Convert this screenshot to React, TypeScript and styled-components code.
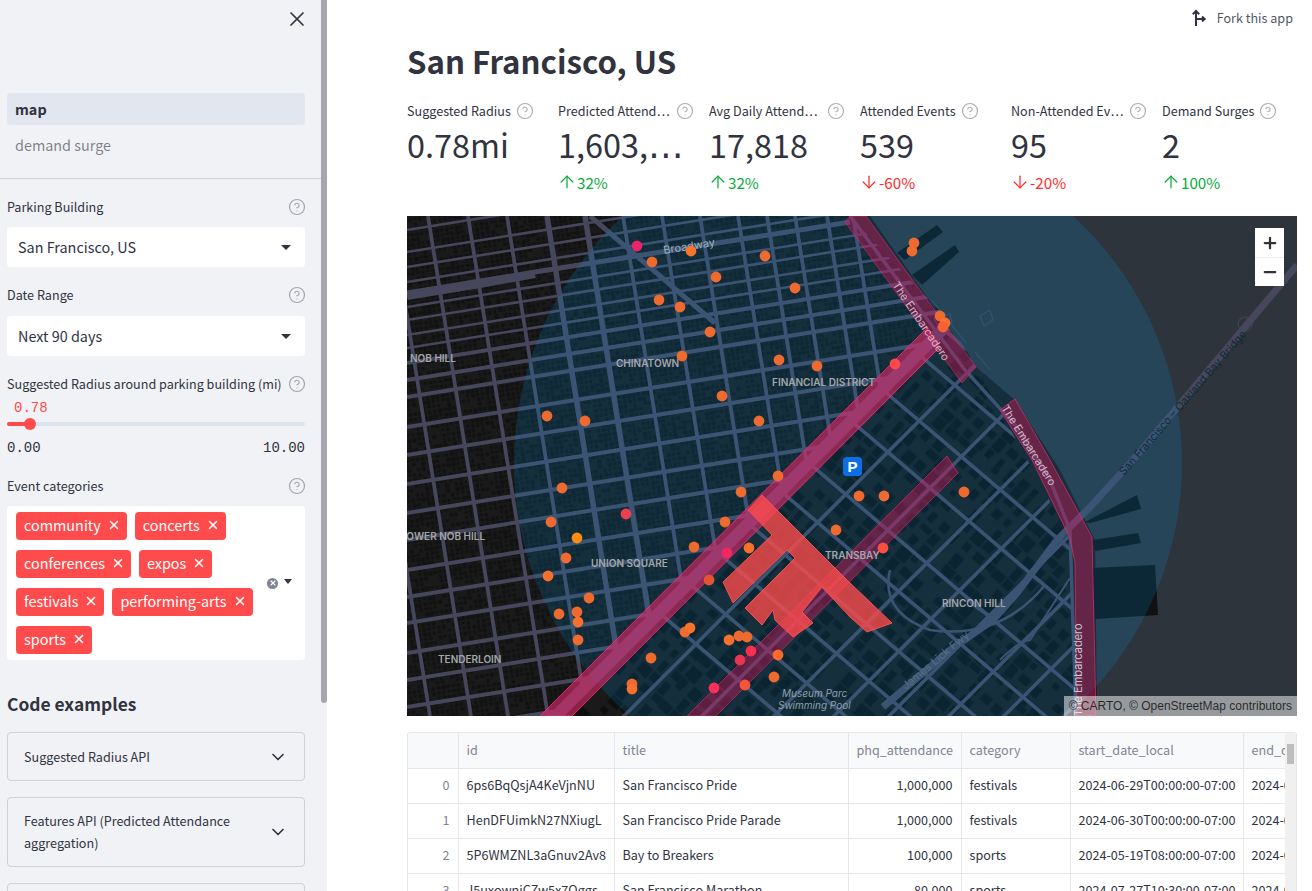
import React, { useMemo } from 'react';
import styled, { createGlobalStyle } from 'styled-components';
import { ArrowDown, ArrowUp, ChevronDown, CircleHelp, Minus, Plus, X } from 'lucide-react';

const TEXT = '#31333f';
const RED = '#ff4b4b';

const GlobalStyle = createGlobalStyle`
  html, body {
    margin: 0;
    height: 100%;
    overflow: hidden;
    background: #fff;
    color: ${TEXT};
    font-family: "Noto Sans CJK SC", "Noto Sans", sans-serif;
  }
  * { box-sizing: border-box; }
`;

const Page = styled.div`
  display: flex;
  height: 891px;
  overflow: hidden;
`;

const Sidebar = styled.aside`
  display: flex;
  flex: 0 0 327px;
  height: 100%;
  background: #f0f2f6;
`;

const SideContent = styled.div`
  flex: 0 0 321px;
  min-width: 0;
  padding-left: 7px;
  padding-right: 16px;
`;

const ScrollThumb = styled.div`
  flex: 0 0 6px;
  height: 703px;
  background: #a6a6ae;
  border-radius: 0 0 3px 3px;
`;

const CloseRow = styled.div`
  display: flex;
  justify-content: flex-end;
  align-items: center;
  height: 38px;
  margin-right: -4px;
  margin-bottom: 55px;
`;

const Nav = styled.nav`
  display: flex;
  flex-direction: column;
  gap: 5px;
  margin-bottom: 16px;
`;

const NavItem = styled.div<{ $active?: boolean }>`
  height: 32px;
  line-height: ${p => (p.$active ? 32 : 30)}px;
  padding-left: 8px;
  border-radius: 4px;
  font-size: 14.4px;
  font-weight: ${p => (p.$active ? 700 : 400)};
  color: ${p => (p.$active ? TEXT : 'rgba(49, 51, 63, 0.6)')};
  background: ${p => (p.$active ? '#e2e6ee' : 'transparent')};
`;

const Divider = styled.div`
  height: 1px;
  background: #cfd0d5;
  margin: 0 -16px 18px -7px;
`;

const FieldLabel = styled.div<{ $gap?: number }>`
  display: flex;
  justify-content: space-between;
  align-items: center;
  height: 20px;
  font-size: 12.6px;
  line-height: 20px;
  margin-bottom: ${p => p.$gap ?? 10}px;
  margin-right: -1px;
  white-space: nowrap;
`;

const Help = styled(CircleHelp)`
  flex: none;
  color: rgba(49, 51, 63, 0.4);
`;

const SelectBox = styled.div`
  display: flex;
  justify-content: space-between;
  align-items: center;
  height: 40px;
  padding: 0 14px 2px 11px;
  margin-bottom: 18px;
  background: #fff;
  border-radius: 4px;
  font-size: 14.4px;
`;

const Caret = styled.span`
  width: 0;
  height: 0;
  margin-top: 2px;
  border-left: 5px solid transparent;
  border-right: 5px solid transparent;
  border-top: 5px solid ${TEXT};
`;

const SliderValue = styled.div`
  margin-top: 4px;
  padding-left: 7px;
  height: 20px;
  line-height: 20px;
  font-family: "Liberation Mono", monospace;
  font-size: 14px;
  color: ${RED};
`;

const Track = styled.div`
  position: relative;
  height: 4px;
  margin-top: 4px;
  border-radius: 2px;
  background: #dfe3ed;
`;

const TrackFill = styled.div`
  height: 100%;
  border-radius: 2px;
  background: ${RED};
`;

const Thumb = styled.div`
  position: absolute;
  top: -4px;
  width: 12px;
  height: 12px;
  border-radius: 50%;
  background: ${RED};
`;

const Ticks = styled.div`
  display: flex;
  justify-content: space-between;
  height: 20px;
  line-height: 20px;
  margin-top: 12px;
  margin-bottom: 18px;
  font-family: "Liberation Mono", monospace;
  font-size: 14px;
`;

const MultiBox = styled.div`
  display: flex;
  align-items: center;
  height: 154px;
  padding-left: 9px;
  background: #fff;
  border-radius: 4px;
`;

const TagWrap = styled.div`
  display: flex;
  flex-wrap: wrap;
  align-content: center;
  gap: 10px 8px;
  flex: 0 0 248px;
`;

const Tag = styled.span`
  display: inline-flex;
  align-items: center;
  height: 28px;
  padding: 0 8px 2px;
  border-radius: 4px;
  background: ${RED};
  color: #fff;
  font-size: 14.4px;
  line-height: 26px;
`;

const TagClose = styled(X)`
  margin-left: 6px;
  margin-right: -2px;
`;

const MultiControls = styled.div`
  display: flex;
  align-items: center;
  gap: 6px;
  margin-left: 3px;
`;

const ClearDot = styled.span`
  display: flex;
  align-items: center;
  justify-content: center;
  width: 11px;
  height: 11px;
  border-radius: 50%;
  background: #7f8391;
  color: #fff;
`;

const SmallCaret = styled(Caret)`
  border-left-width: 4.5px;
  border-right-width: 4.5px;
  margin-top: -3px;
`;

const SideHeading = styled.h2`
  margin: 30px 0 14px;
  height: 28px;
  line-height: 28px;
  font-size: 17.4px;
  font-weight: 700;
  color: ${TEXT};
`;

const Expander = styled.div`
  display: flex;
  justify-content: space-between;
  align-items: center;
  padding: 12px 16px 12px 16px;
  min-height: 49px;
  margin-bottom: 16px;
  border: 1px solid #d0d1d6;
  border-radius: 4px;
  font-size: 12.6px;
  line-height: 22px;
`;

const ExpanderText = styled.span`
  max-width: 230px;
`;

const Main = styled.main`
  flex: 1;
  min-width: 0;
  padding: 0 15px 0 80px;
`;

const TopBar = styled.div`
  display: flex;
  justify-content: flex-end;
  align-items: center;
  gap: 10px;
  height: 36px;
  padding-bottom: 1px;
  margin-right: 4px;
  font-size: 12.6px;
  color: rgba(49, 51, 63, 0.85);
`;

const Title = styled.h1`
  margin: 5px 0 18px;
  height: 40px;
  line-height: 40px;
  font-size: 31.2px;
  font-weight: 700;
`;

const Metrics = styled.section`
  display: grid;
  grid-template-columns: repeat(6, 135px);
  gap: 16px;
  margin-bottom: 23px;
`;

const Metric = styled.div`
  min-width: 0;
`;

const MetricLabelRow = styled.div`
  display: flex;
  align-items: center;
  gap: 5px;
  height: 20px;
  margin-top: 2px;
`;

const MetricLabel = styled.span<{ $cut?: boolean }>`
  flex: ${p => (p.$cut ? '0 0 113px' : '0 0 auto')};
  white-space: nowrap;
  font-size: 12.6px;
  line-height: 20px;
`;

const MetricValue = styled.div`
  height: 48px;
  line-height: 46px;
  font-size: 32.4px;
  white-space: nowrap;
`;

// the CJK font centres its ellipsis, this one sits on the baseline
const Dots = styled.span`
  font-family: "DejaVu Sans", sans-serif;
  font-size: 1.1em;
`;

const MetricDelta = styled.div<{ $down?: boolean }>`
  display: flex;
  align-items: center;
  height: 22px;
  margin-top: 2px;
  margin-left: -1px;
  font-size: 15.2px;
  color: ${p => (p.$down ? '#ff2b2b' : '#09ab3b')};
`;

const DeltaIcon = styled.span`
  display: flex;
`;

const MapCanvas = styled.div`
  position: relative;
  height: 500px;
  overflow: hidden;
  margin-bottom: 16px;
`;

const MapSvg = styled.svg`
  display: block;
  width: 890px;
  height: 500px;
`;

const ZoomControls = styled.div`
  position: absolute;
  top: 12px;
  right: 13px;
  width: 29px;
  background: #fff;
  display: flex;
  flex-direction: column;
`;

const ZoomButton = styled.div`
  display: flex;
  align-items: center;
  justify-content: center;
  height: 29px;
  color: #333;
  & + & {
    border-top: 1px solid #eee;
  }
`;

const Attribution = styled.div`
  position: absolute;
  right: 0;
  bottom: 0;
  height: 20px;
  padding: 0 5px;
  line-height: 20px;
  font-family: "Liberation Sans", Arial, sans-serif;
  font-size: 12px;
  color: rgba(0, 0, 0, 0.75);
  background: rgba(255, 255, 255, 0.5);
  white-space: nowrap;
`;

const TableWrap = styled.div`
  position: relative;
  height: 175px;
  overflow: hidden;
  border: 1px solid #e6e7ea;
  border-bottom: 0;
  border-radius: 4px 4px 0 0;
`;

const DataTable = styled.table`
  table-layout: fixed;
  width: 989px;
  border-collapse: collapse;
  font-size: 12.6px;
`;

const HeadCell = styled.th<{ $right?: boolean }>`
  height: 35px;
  padding: 0 8px 2px;
  background: #f8f9fb;
  border-right: 1px solid #e6e7ea;
  border-bottom: 1px solid #e6e7ea;
  font-weight: 400;
  color: #808495;
  text-align: ${p => (p.$right ? 'right' : 'left')};
  white-space: nowrap;
  overflow: hidden;
`;

const Cell = styled.td<{ $right?: boolean; $muted?: boolean }>`
  height: 35px;
  padding: 0 8px 2px;
  border-right: 1px solid #e6e7ea;
  border-bottom: 1px solid #e6e7ea;
  color: ${p => (p.$muted ? '#808495' : TEXT)};
  text-align: ${p => (p.$right ? 'right' : 'left')};
  white-space: nowrap;
  overflow: hidden;
`;

const TableScroll = styled.div`
  position: absolute;
  top: 0;
  right: 0;
  bottom: 0;
  width: 11px;
  padding-top: 11px;
  background: #f0f0f0;
`;

const TableScrollThumb = styled.div`
  width: 7px;
  height: 20px;
  margin-left: 2px;
  background: #bdbdbd;
`;

const metrics = [
  { label: 'Suggested Radius', value: '0.78mi' },
  { label: 'Predicted Attend', cut: true, value: '1,603,', valueCut: true, delta: '32%' },
  { label: 'Avg Daily Attend', cut: true, value: '17,818', delta: '32%' },
  { label: 'Attended Events', value: '539', delta: '-60%', down: true },
  { label: 'Non-Attended Ev', cut: true, value: '95', delta: '-20%', down: true },
  { label: 'Demand Surges', value: '2', delta: '100%' },
];

const categories = ['community', 'concerts', 'conferences', 'expos', 'festivals', 'performing-arts', 'sports'];

const columns = [
  { name: '', width: 50 },
  { name: 'id', width: 156 },
  { name: 'title', width: 234 },
  { name: 'phq_attendance', width: 113, right: true },
  { name: 'category', width: 109 },
  { name: 'start_date_local', width: 173 },
  { name: 'end_date_local', width: 154 },
];

const rows = [
  ['0', '6ps6BqQsjA4KeVjnNU', 'San Francisco Pride', '1,000,000', 'festivals', '2024-06-29T00:00:00-07:00', '2024-06-30T23:59:59-07:00'],
  ['1', 'HenDFUimkN27NXiugL', 'San Francisco Pride Parade', '1,000,000', 'festivals', '2024-06-30T00:00:00-07:00', '2024-06-30T23:59:59-07:00'],
  ['2', '5P6WMZNL3aGnuv2Av8', 'Bay to Breakers', '100,000', 'sports', '2024-05-19T08:00:00-07:00', '2024-05-19T14:00:00-07:00'],
  ['3', 'J5uxownjCZw5x7Oggs', 'San Francisco Marathon', '80,000', 'sports', '2024-07-27T10:30:00-07:00', '2024-07-28T14:00:00-07:00'],
];

// event dots in page coordinates, the map svg uses the same numbers in its viewBox
const ORANGE = '#ef6a2e';
const dots: [number, number, string?][] = [
  [637, 246, '#e8246a'], [691, 251, '#f5762a'], [652, 262], [765, 256], [716, 277], [795, 288], [659, 300], [680, 307],
  [710, 332], [682, 356], [779, 360], [817, 366], [722, 396], [759, 421], [547, 416], [585, 421],
  [914, 243], [912, 251], [940, 316], [945, 323, '#f8702c'], [943, 327, '#fb5f35'], [895, 364, '#fb4a4c'],
  [778, 476], [741, 492], [562, 488], [626, 514, '#e8404f'], [551, 522], [725, 522], [836, 530], [577, 538, '#fb8c14'],
  [694, 547], [749, 548, '#f9702a'], [727, 553, '#f2275f'], [566, 558], [548, 576, '#f7702c'], [709, 580, '#e4552f'],
  [589, 598], [559, 614], [577, 612], [578, 622, '#f7702c'], [685, 632], [690, 628, '#f9732c'], [578, 640],
  [729, 640, '#f7702c'], [739, 636], [747, 637], [751, 651, '#f7304f'], [778, 655, '#fb6a2a'], [740, 660, '#ea3455'],
  [651, 658], [774, 677], [632, 684], [632, 689, '#f7702c'], [714, 688, '#f7305a'], [745, 685, '#f6553a'],
  [859, 496], [884, 496], [964, 492], [883, 548, '#fb5040'],
];

const westEW = [230, 252, 267, 282, 307, 320, 335, 348, 363, 380, 397, 427, 455, 484, 513, 540, 570, 597, 623, 653, 680, 707, 735, 762, 790];
const westNS = [350, 391, 428, 468, 507, 547, 585, 623, 662, 700, 738, 767, 795, 827, 853];
const eastB = [190, 250, 296, 362, 420, 498, 550, 610, 665, 720, 775];
const eastA = [490, 568, 640, 700, 755, 815, 870, 930];

const seeded = (seed: number) => {
  let s = seed;
  return () => {
    s = (s * 16807) % 2147483647;
    return s / 2147483647;
  };
};

const buildingRects = (size: number, cell: number, min: number, max: number, seed: number) => {
  const rand = seeded(seed);
  const out: { x: number; y: number; w: number; h: number }[] = [];
  for (let y = 0; y < size; y += cell) {
    for (let x = 0; x < size; x += cell) {
      if (rand() < 0.2) continue;
      out.push({ x: x + 0.5, y: y + 0.5, w: min + rand() * (max - min), h: min + rand() * (max - min) });
    }
  }
  return out;
};

const CityMap: React.FC = () => {
  const west = useMemo(() => buildingRects(154, 5, 2.5, 4.5, 7), []);
  const east = useMemo(() => buildingRects(160, 15, 6, 14, 91), []);

  return (
    <MapSvg viewBox="407 216 890 500" xmlns="http://www.w3.org/2000/svg">
      <defs>
        <pattern id="westBuildings" width="154" height="154" patternUnits="userSpaceOnUse" patternTransform="rotate(-9)">
          {west.map((b, i) => (
            <rect key={i} x={b.x} y={b.y} width={b.w} height={b.h} fill="#111" />
          ))}
        </pattern>
        <pattern id="eastBuildings" width="160" height="160" patternUnits="userSpaceOnUse" patternTransform="rotate(42)">
          {east.map((b, i) => (
            <rect key={i} x={b.x} y={b.y} width={b.w} height={b.h} fill="#0e0e0e" />
          ))}
        </pattern>
        <clipPath id="westClip">
          <polygon points="407,216 850,216 950,322 556,716 407,716" />
        </clipPath>
        <clipPath id="eastClip">
          <polygon points="950,322 1000,410 1070,538 1077,716 556,716" />
        </clipPath>
      </defs>

      <rect x="407" y="216" width="890" height="500" fill="#2d343b" />
      <polygon points="407,216 870,216 976,367 1015,400 1060,470 1095,540 1097,716 407,716" fill="#1a1a1a" />
      <rect x="407" y="216" width="890" height="500" fill="url(#westBuildings)" clipPath="url(#westClip)" />
      <rect x="407" y="216" width="890" height="500" fill="url(#eastBuildings)" clipPath="url(#eastClip)" />

      {/* piers */}
      <g fill="#0f1112">
        <polygon points="897,253 937,225 943,232 905,260" />
        <polygon points="912,275 955,245 959,252 922,285" />
        <polygon points="1085,522 1137,495 1141,509 1090,523" />
        <polygon points="1093,540 1138,533 1141,543 1095,551" />
        <polygon points="1092,568 1155,565 1158,615 1095,619" />
      </g>
      <g fill="none" stroke="#3a5566" strokeWidth="0.8">
        <polygon points="934,318 950,314 952,323 938,326" />
        <polygon points="980,316 990,310 993,320 984,326" />
        <polyline points="932,300 966,343" />
        <polyline points="975,352 990,370" />
      </g>

      <g stroke="#46465c" fill="none">
        <g clipPath="url(#westClip)">
          {westEW.map((y, i) => (
            <line key={y} x1={407} y1={y} x2={1000} y2={y - 0.16 * 593} strokeWidth={i < 8 ? 2.6 : 4} />
          ))}
          {westNS.map((x, i) => (
            <line key={x} x1={x} y1={216} x2={x + 0.16 * 500} y2={716} strokeWidth={i === 5 || i === 6 ? 5.5 : 3.8} />
          ))}
          <polyline points="407,293 535,272 850,222" strokeWidth="5" />
          <polyline points="407,296 480,284 535,274" strokeWidth="8" />
          <line x1="590" y1="216" x2="715" y2="323" strokeWidth="5" />
        </g>
        <g clipPath="url(#eastClip)">
          {eastA.map(y => (
            <line key={y} x1={500} y1={y + 350} x2={1150} y2={y - 300} strokeWidth="3.6" />
          ))}
          {eastB.map(y => (
            <line key={y} x1={500} y1={y - 0.85 * 350} x2={1150} y2={y + 0.85 * 300} strokeWidth="3.6" />
          ))}
          <path d="M890 570 Q880 612 930 630 Q1000 640 1045 585" strokeWidth="2.5" />
          <path d="M960 590 Q985 625 1005 610" strokeWidth="2" />
          <path d="M1000 660 Q1020 640 1030 640 L1070 578" strokeWidth="2" />
        </g>
        <line x1="540" y1="732" x2="946" y2="326" strokeWidth="12" />
        <polyline points="850,216 965,370 1015,425 1048,475 1070,530 1076,716" strokeWidth="3.5" />
        <polyline points="883,707 950,650 993,620 1017,593 1057,540 1090,507 1133,460 1297,265" strokeWidth="7" />
        <circle cx="1245" cy="324" r="7" strokeWidth="1" />
      </g>

      <circle cx="848" cy="463" r="334" fill="rgba(0, 165, 255, 0.15)" />

      <g strokeLinejoin="round">
        <polygon points="845,222 850,216 866,216 976,367 962,383" fill="rgba(210, 25, 90, 0.42)" stroke="rgba(225, 45, 105, 0.55)" />
        <polygon points="1000,410 1015,399 1050,460 1092,537 1096,716 1077,716 1075,563 1070,538 1032,460" fill="rgba(210, 25, 90, 0.42)" stroke="rgba(225, 45, 105, 0.7)" />
        <polygon points="687,716 947,456 958,473 716,716" fill="rgba(210, 25, 90, 0.42)" stroke="rgba(225, 45, 105, 0.6)" />
        <polygon points="540,716 927,328 940,347 572,716" fill="rgba(225, 40, 105, 0.6)" stroke="rgba(240, 50, 115, 0.85)" />
        <polygon
          points="748,510 762,495 850,583 892,623 867,632 850,617 822,587 802,612 813,623 793,637 775,620 773,610 762,625 745,608 795,558 787,550 733,603 723,582 772,535"
          fill="rgba(255, 75, 75, 0.78)"
          stroke="#f5514f"
        />
      </g>

      <g fontFamily="Inter, Lato, sans-serif" fontSize="10" fontWeight="600" fill="#a3a7aa">
        <text x="410" y="361.5">NOB HILL</text>
        <text x="616" y="366.5">CHINATOWN</text>
        <text x="772" y="385.5">FINANCIAL DISTRICT</text>
        <text x="401" y="539.5">LOWER NOB HILL</text>
        <text x="591" y="566.5">UNION SQUARE</text>
        <text x="825" y="558.5">TRANSBAY</text>
        <text x="942" y="606.5">RINCON HILL</text>
        <text x="438" y="662.5">TENDERLOIN</text>
      </g>
      <g fontFamily="Inter, Lato, sans-serif" fontSize="10" fontStyle="italic" fill="#8fa0ab">
        <text x="782" y="697">Museum Parc</text>
        <text x="778" y="709">Swimming Pool</text>
      </g>
      <g fontFamily="Inter, Lato, sans-serif" fontSize="11">
        <text x="664" y="254" fill="#9fb0bb" transform="rotate(-9 664 254)">Broadway</text>
        <text x="892" y="285" fill="#d3b7c8" transform="rotate(56 892 285)">The Embarcadero</text>
        <text x="1001" y="408" fill="#d3b7c8" transform="rotate(58 1001 408)">The Embarcadero</text>
        <text x="1082" y="716" fill="#c5c9d2" transform="rotate(-90 1082 716)">The Embarcadero</text>
        <text x="906" y="690" fill="#55707f" transform="rotate(-40 906 690)">James Lick Fwy</text>
        <text x="1124" y="476" fill="#0f2a38" transform="rotate(-49 1124 476)">San Francisco – Oakland Bay Bridge</text>
      </g>

      {dots.map(([x, y, c], i) => (
        <circle key={i} cx={x} cy={y} r="5.4" fill={c ?? ORANGE} />
      ))}

      <rect x="843" y="457" width="19" height="19" rx="3.5" fill="#0b6fe3" />
      <text x="852.5" y="471.5" textAnchor="middle" fontFamily="Liberation Sans, sans-serif" fontWeight="700" fontSize="15" fill="#fff">P</text>
    </MapSvg>
  );
};

const ForkIcon = () => (
  <svg width="16" height="18" viewBox="0 0 16 18" fill="none" stroke="#31333f" strokeWidth="2">
    <path d="M5 17V2M1.8 5.2 5 2l3.2 3.2" />
    <path d="M5 10h8.5M11 7.5l2.8 2.500L11 12.5" strokeWidth="1.8" />
  </svg>
);

export default function App() {
  return (
    <>
      <GlobalStyle />
      <Page>
        <Sidebar>
          <SideContent>
            <CloseRow>
              <X size={24} strokeWidth={1.7} />
            </CloseRow>
            <Nav>
              <NavItem $active>map</NavItem>
              <NavItem>demand surge</NavItem>
            </Nav>
            <Divider />
            <FieldLabel>
              Parking Building
              <Help size={18} strokeWidth={1.6} />
            </FieldLabel>
            <SelectBox>
              San Francisco, US
              <Caret />
            </SelectBox>
            <FieldLabel $gap={11}>
              Date Range
              <Help size={18} strokeWidth={1.6} />
            </FieldLabel>
            <SelectBox>
              Next 90 days
              <Caret />
            </SelectBox>
            <FieldLabel $gap={0}>
              Suggested Radius around parking building (mi)
              <Help size={18} strokeWidth={1.6} />
            </FieldLabel>
            <SliderValue>0.78</SliderValue>
            <Track>
              <TrackFill style={{ width: `${(0.78 / 10) * 100}%` }} />
              <Thumb style={{ left: 17 }} />
            </Track>
            <Ticks>
              <span>0.00</span>
              <span>10.00</span>
            </Ticks>
            <FieldLabel>
              Event categories
              <Help size={18} strokeWidth={1.6} />
            </FieldLabel>
            <MultiBox>
              <TagWrap>
                {categories.map(c => (
                  <Tag key={c}>
                    {c}
                    <TagClose size={14} strokeWidth={2.6} />
                  </Tag>
                ))}
              </TagWrap>
              <MultiControls>
                <ClearDot>
                  <X size={8} strokeWidth={3.5} />
                </ClearDot>
                <SmallCaret />
              </MultiControls>
            </MultiBox>
            <SideHeading>Code examples</SideHeading>
            <Expander>
              <ExpanderText>Suggested Radius API</ExpanderText>
              <ChevronDown size={20} strokeWidth={2} />
            </Expander>
            <Expander>
              <ExpanderText>Features API (Predicted Attendance aggregation)</ExpanderText>
              <ChevronDown size={20} strokeWidth={2} />
            </Expander>
            <Expander>
              <ExpanderText>Events API</ExpanderText>
              <ChevronDown size={20} strokeWidth={2} />
            </Expander>
          </SideContent>
          <ScrollThumb />
        </Sidebar>
        <Main>
          <TopBar>
            <ForkIcon />
            Fork this app
          </TopBar>
          <Title>San Francisco, US</Title>
          <Metrics>
            {metrics.map(m => (
              <Metric key={m.label}>
                <MetricLabelRow>
                  <MetricLabel $cut={m.cut}>
                    {m.label}
                    {m.cut && <Dots>…</Dots>}
                  </MetricLabel>
                  <Help size={18} strokeWidth={1.6} />
                </MetricLabelRow>
                <MetricValue>
                  {m.value}
                  {m.valueCut && <Dots>…</Dots>}
                </MetricValue>
                {m.delta && (
                  <MetricDelta $down={m.down}>
                    <DeltaIcon>{m.down ? <ArrowDown size={20} strokeWidth={1.5} /> : <ArrowUp size={20} strokeWidth={1.5} />}</DeltaIcon>
                    {m.delta}
                  </MetricDelta>
                )}
              </Metric>
            ))}
          </Metrics>
          <MapCanvas>
            <CityMap />
            <ZoomControls>
              <ZoomButton>
                <Plus size={18} strokeWidth={3} />
              </ZoomButton>
              <ZoomButton>
                <Minus size={18} strokeWidth={3} />
              </ZoomButton>
            </ZoomControls>
            <Attribution>© CARTO, © OpenStreetMap contributors</Attribution>
          </MapCanvas>
          <TableWrap>
            <DataTable>
              <colgroup>
                {columns.map(c => (
                  <col key={c.name} style={{ width: c.width }} />
                ))}
              </colgroup>
              <thead>
                <tr>
                  {columns.map(c => (
                    <HeadCell key={c.name} $right={c.right}>
                      {c.name}
                    </HeadCell>
                  ))}
                </tr>
              </thead>
              <tbody>
                {rows.map(r => (
                  <tr key={r[0]}>
                    {r.map((v, i) => (
                      <Cell key={i} $right={i === 0 || i === 3} $muted={i === 0}>
                        {v}
                      </Cell>
                    ))}
                  </tr>
                ))}
              </tbody>
            </DataTable>
            <TableScroll>
              <TableScrollThumb />
            </TableScroll>
          </TableWrap>
        </Main>
      </Page>
    </>
  );
}
